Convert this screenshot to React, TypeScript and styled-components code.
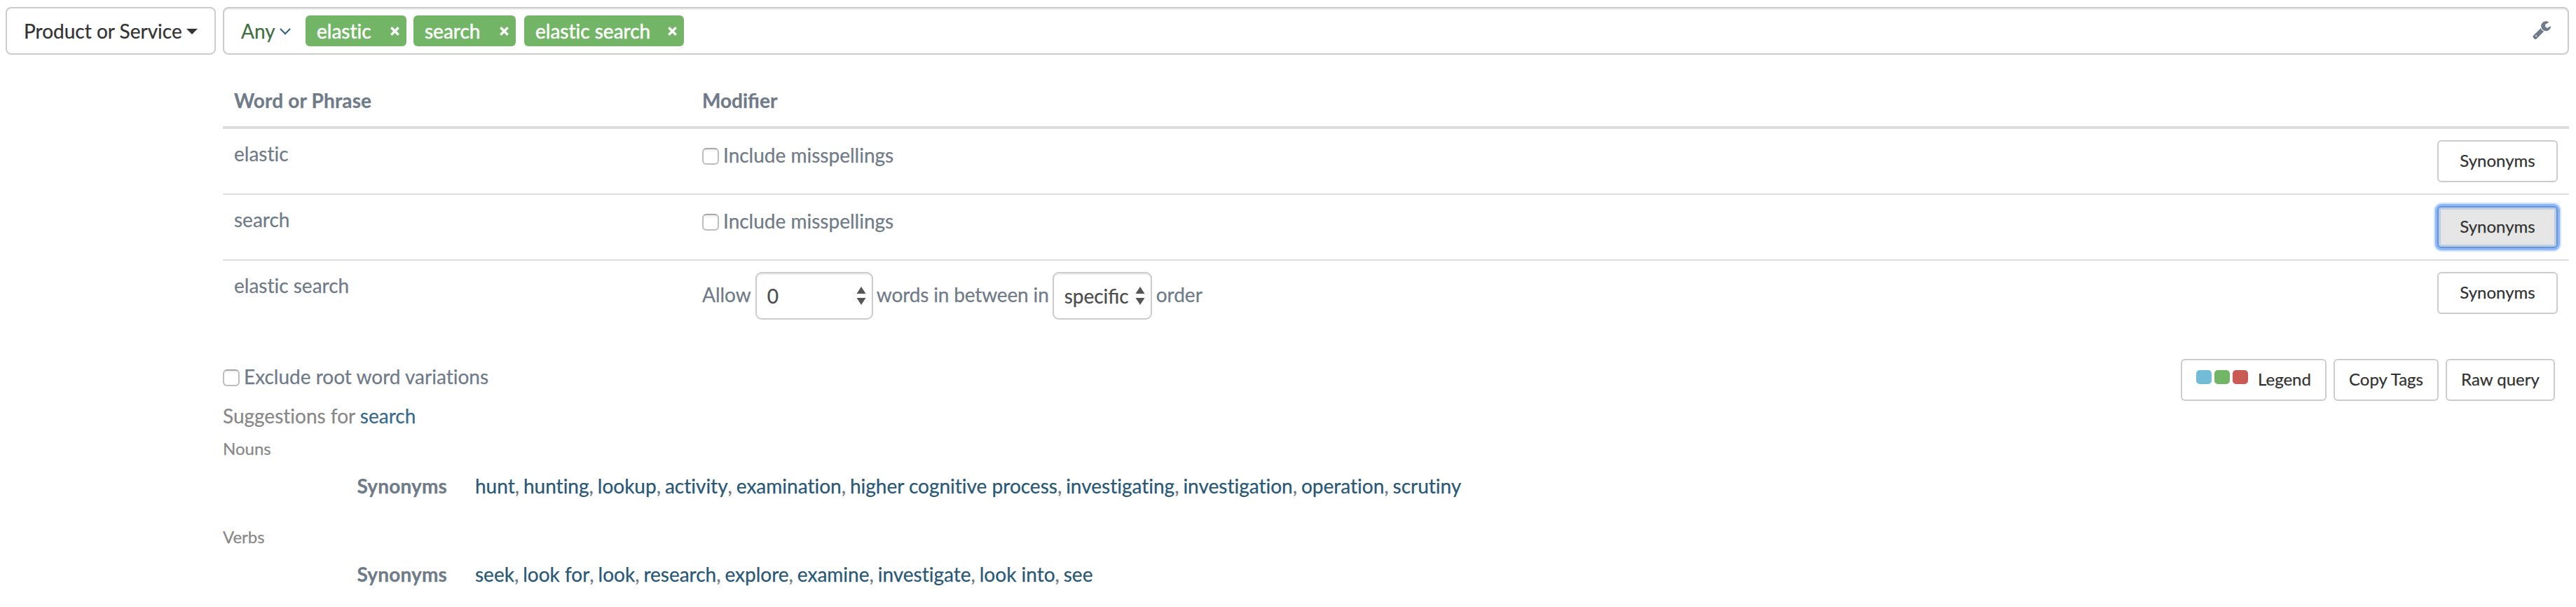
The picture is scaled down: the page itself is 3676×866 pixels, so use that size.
import React from "react";
import styled, { createGlobalStyle } from "styled-components";

const GlobalStyle = createGlobalStyle`
  * { box-sizing: border-box; }
  body {
    margin: 0;
    background: #fff;
    color: #6f7b88;
    font-family: Lato, "Liberation Sans", sans-serif;
    font-size: 28px;
    line-height: 40px;
    font-variant-ligatures: none;
    -webkit-text-stroke: 0.25px currentColor;
  }
`;

const Page = styled.main`
  width: 3676px;
  height: 866px;
  padding: 10px 10px 0 8px;
  overflow: hidden;
`;

const Bar = styled.div`
  display: flex;
  gap: 10px;
  height: 68px;
`;

const FieldButton = styled.button`
  display: flex;
  align-items: center;
  justify-content: space-between;
  width: 300px;
  padding: 0 24px;
  border: 2px solid #ccc;
  border-radius: 8px;
  background: #fff;
  color: #333;
  font: inherit;
  white-space: nowrap;
`;

const Caret = styled.span`
  margin-top: 2px;
  border-top: 8px solid #333;
  border-left: 8px solid transparent;
  border-right: 8px solid transparent;
`;

const QueryInput = styled.div`
  flex: 1;
  display: flex;
  align-items: center;
  padding: 0 24px;
  border: 2px solid #ccc;
  border-radius: 8px;
  box-shadow: inset 0 2px 2px rgba(0, 0, 0, 0.075);
`;

const Operator = styled.a`
  display: flex;
  align-items: center;
  gap: 6px;
  width: 92px;
  color: #40703f;

  svg { margin-top: 2px; }
`;

const Tag = styled.span<{ $width: number; $gap: number }>`
  display: flex;
  align-items: center;
  justify-content: space-between;
  width: ${(p) => p.$width}px;
  height: 44px;
  margin-right: ${(p) => p.$gap}px;
  padding: 0 10px 0 16px;
  border-radius: 6px;
  background: #72b566;
  color: #fff;
  -webkit-text-stroke: 0.5px #fff;
`;

const WrenchButton = styled.span`
  display: flex;
  margin-left: auto;
  margin-top: -2px;
`;

const Body = styled.div`
  margin-left: 310px;
`;

const Table = styled.section`
  margin-top: 30px;
`;

const Row = styled.div`
  display: grid;
  grid-template-columns: 668px 1fr auto;
  align-items: start;
  height: 94px;
  padding: 16px 16px 0;
  border-top: 2px solid #ddd;
`;

const HeaderRow = styled(Row)`
  height: 72px;
  padding-top: 15px;
  border-top: 0;
  font-weight: 700;
`;

const HeaderCell = styled.span<{ $spacing?: number }>`
  letter-spacing: ${(p) => (p.$spacing ? `${p.$spacing}px` : "normal")};
  font-variant-ligatures: normal;
`;

const FirstRow = styled(Row)`
  height: 96px;
  border-top-width: 4px;
`;

const Keyword = styled.span`
  margin-top: -1px;
`;

const CheckLabel = styled.label<{ $top?: number }>`
  display: flex;
  align-items: center;
  gap: 6px;
  padding-top: ${(p) => p.$top ?? 0}px;
`;

const Checkbox = styled.span`
  width: 24px;
  height: 24px;
  margin-top: 4px;
  border: 2px solid #bdbdbd;
  border-top-color: #a6a6a6;
  border-radius: 6px;
  background: linear-gradient(#f0f0f0, #fff 25%);
`;

const Phrase = styled.div`
  display: flex;
  align-items: center;
  gap: 6px;
  height: 68px;
`;

const Words = styled.span<{ $before?: number; $after?: number; $spacing?: number }>`
  margin: -4px ${(p) => p.$after ?? 0}px 0 ${(p) => p.$before ?? 0}px;
  letter-spacing: ${(p) => p.$spacing ?? 0}px;
`;

const Select = styled.span<{ $width: number }>`
  display: flex;
  align-items: center;
  justify-content: space-between;
  width: ${(p) => p.$width}px;
  height: 68px;
  padding: 0 8px 0 15px;
  border: 2px solid #ccc;
  border-radius: 9px;
  box-shadow: inset 0 2px 2px rgba(0, 0, 0, 0.075);
  color: #4d4d4d;
  font-variant-ligatures: normal;
`;

const SmallButton = styled.button<{ $width: number; $focused?: boolean }>`
  display: flex;
  align-items: center;
  justify-content: center;
  width: ${(p) => p.$width}px;
  height: 60px;
  padding: 0 0 2px;
  border: 2px solid ${(p) => (p.$focused ? "#6a94d2" : "#ccc")};
  border-radius: 6px;
  background: ${(p) => (p.$focused ? "#e6e6e6" : "#fff")};
  box-shadow: ${(p) =>
    p.$focused
      ? "0 0 0 3px #8ab8fa, 0 0 0 5px #d2e4fd, inset 0 0 0 3px #b9cde9"
      : "none"};
  color: #333;
  font: 24px/36px Lato, "Liberation Sans", sans-serif;
  white-space: nowrap;
`;

const Options = styled.div`
  display: flex;
  justify-content: space-between;
  align-items: flex-start;
  height: 76px;
  margin-top: 48px;
  padding-right: 20px;
`;

const Actions = styled.div`
  display: flex;
  gap: 10px;
`;

const Swatches = styled.span`
  display: flex;
  gap: 4px;
  margin: -6px 14px 0 0;
`;

const Swatch = styled.i<{ $color: string }>`
  width: 22px;
  height: 20px;
  border-radius: 5px;
  background: ${(p) => p.$color};
`;

const Suggestions = styled.div`
  margin-top: -15px;
  color: #888;
`;

const Link = styled.a<{ $soft?: boolean }>`
  color: ${(p) => (p.$soft ? "#376a8b" : "#285876")};
`;

const WordClass = styled.div`
  height: 50px;
  margin-top: 7px;
  color: #888;
  font-size: 24px;
  line-height: 40px;
`;

const SynonymRow = styled.div`
  display: grid;
  grid-template-columns: 320px 1fr;
  column-gap: 40px;
  height: 66px;
  margin-top: 3px;
`;

const Term = styled.strong`
  text-align: right;
  letter-spacing: 0.15px;
`;

const Separator = styled.span`
  letter-spacing: -0.65px;
`;

const Chevron = () => (
  <svg width="16" height="10" viewBox="0 0 16 10" fill="none" stroke="#2d6080" strokeWidth="2">
    <path d="M1 1l7 7.2L15 1" />
  </svg>
);

const Cross = () => (
  <svg width="13" height="13" viewBox="0 0 13 13" stroke="#fff" strokeWidth="3.4">
    <path d="M1.3 1.3l10.4 10.4M11.7 1.3L1.3 11.7" />
  </svg>
);

const Arrows = () => (
  <svg width="14" height="26" viewBox="0 0 14 26" fill="#555">
    <path d="M7 0l6.5 10H.5zM.5 16h13L7 26z" />
  </svg>
);

const Wrench = () => (
  <svg width="26" height="26" viewBox="60 0 1610 1664" fill="#6f7b88">
    <path d="M448 1472q0-26-19-45t-45-19-45 19-19 45 19 45 45 19 45-19 19-45zm644-420l-682 682q-37 37-90 37-52 0-91-37L123 1626q-38-36-38-90 0-53 38-91l681-681q39 98 114.500 173.500T1092 1052zm634-435q0 39-23 106-47 134-164.500 217.500T1280 1024q-185 0-316.500-131.500T832 576t131.500-316.500T1280 128q58 0 121.500 16.500T1509 191q16 11 16 28t-16 28l-293 169v224l193 107q5-3 79-48.500t135.500-81T1694 582q15 0 23.500 10t8.500 25z" transform="translate(-20 -110)" />
  </svg>
);

const tags = [
  { text: "elastic", width: 144, gap: 10 },
  { text: "search", width: 146, gap: 12 },
  { text: "elastic search", width: 228, gap: 0 },
];

const nouns = ["hunt", "hunting", "lookup", "activity", "examination", "higher cognitive process", "investigating", "investigation", "operation", "scrutiny"];
const verbs = ["seek", "look for", "look", "research", "explore", "examine", "investigate", "look into", "see"];

const LinkList = ({ words }: { words: string[] }) => (
  <div>
    {words.map((word, i) => (
      <React.Fragment key={word}>
        {i > 0 && <Separator>, </Separator>}
        <Link>{word}</Link>
      </React.Fragment>
    ))}
  </div>
);

export default function App() {
  return (
    <Page>
      <GlobalStyle />
      <Bar>
        <FieldButton>
          Product or Service
          <Caret />
        </FieldButton>
        <QueryInput>
          <Operator>
            Any
            <Chevron />
          </Operator>
          {tags.map((t) => (
            <Tag key={t.text} $width={t.width} $gap={t.gap}>
              {t.text}
              <Cross />
            </Tag>
          ))}
          <WrenchButton>
            <Wrench />
          </WrenchButton>
        </QueryInput>
      </Bar>
      <Body>
        <Table>
          <HeaderRow>
            <HeaderCell $spacing={0.15}>Word or Phrase</HeaderCell>
            <HeaderCell>Modifier</HeaderCell>
          </HeaderRow>
          <FirstRow>
            <Keyword>elastic</Keyword>
            <CheckLabel $top={1}>
              <Checkbox />
              Include misspellings
            </CheckLabel>
            <SmallButton $width={172}>Synonyms</SmallButton>
          </FirstRow>
          <Row>
            <Keyword>search</Keyword>
            <CheckLabel $top={1}>
              <Checkbox />
              Include misspellings
            </CheckLabel>
            <SmallButton $width={172} $focused>Synonyms</SmallButton>
          </Row>
          <Row>
            <Keyword>elastic search</Keyword>
            <Phrase>
              <Words>Allow</Words>
              <Select $width={168}>
                0
                <Arrows />
              </Select>
              <Words $before={-1} $after={-1} $spacing={-0.15}>words in between in</Words>
              <Select $width={142}>
                specific
                <Arrows />
              </Select>
              <Words>order</Words>
            </Phrase>
            <SmallButton $width={172}>Synonyms</SmallButton>
          </Row>
        </Table>
        <Options>
          <CheckLabel $top={5}>
            <Checkbox />
            Exclude root word variations
          </CheckLabel>
          <Actions>
            <SmallButton $width={208}>
              <Swatches>
                <Swatch $color="#73bcd8" />
                <Swatch $color="#72b566" />
                <Swatch $color="#ca5a54" />
              </Swatches>
              Legend
            </SmallButton>
            <SmallButton $width={150}>Copy Tags</SmallButton>
            <SmallButton $width={156}>Raw query</SmallButton>
          </Actions>
        </Options>
        <Suggestions>
          Suggestions for <Link $soft>search</Link>
        </Suggestions>
        <WordClass>Nouns</WordClass>
        <SynonymRow>
          <Term>Synonyms</Term>
          <LinkList words={nouns} />
        </SynonymRow>
        <WordClass>Verbs</WordClass>
        <SynonymRow>
          <Term>Synonyms</Term>
          <LinkList words={verbs} />
        </SynonymRow>
      </Body>
    </Page>
  );
}
